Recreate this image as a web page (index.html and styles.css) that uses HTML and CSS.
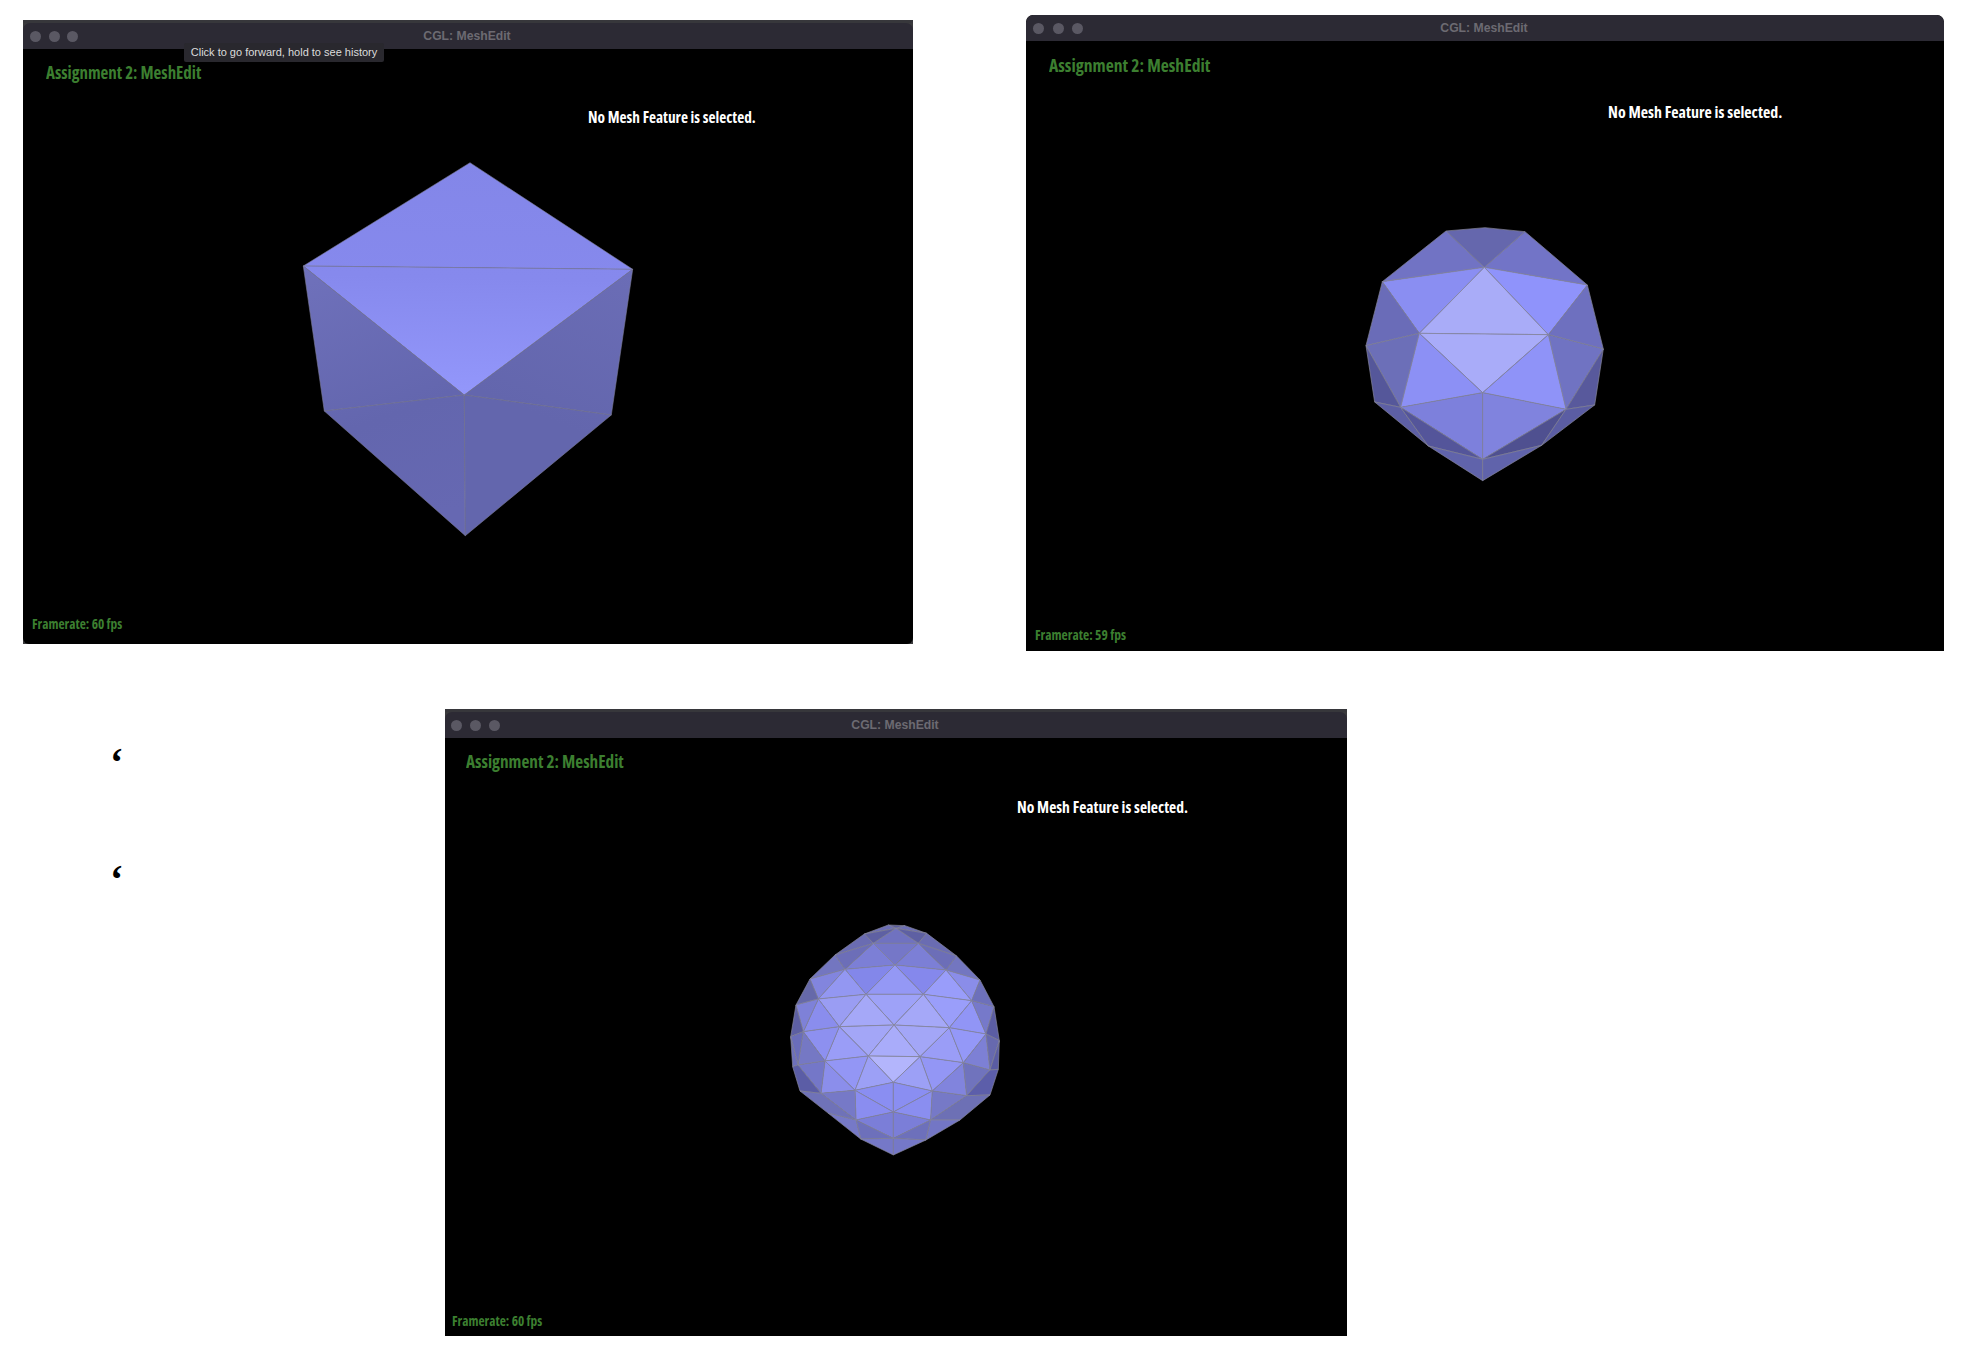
FILE: index.html
```html
<!DOCTYPE html>
<html lang="en">
<head>
<meta charset="utf-8">
<title>CGL: MeshEdit</title>
<link rel="stylesheet" href="styles.css">
</head>
<body>
<main class="page">
  <div class="row row-top">
    <section class="window window-a">
      <div class="strip"><span class="strip-text">like zoom out and it flies</span></div>
      <header class="titlebar">
        <div class="dots"><i></i><i></i><i></i></div>
        <div class="wintitle">CGL: MeshEdit</div>
      </header>
      <div class="tooltip">Click to go forward, hold to see history</div>
      <div class="view">
        <svg class="mesh" viewBox="23 49 890 595" aria-hidden="true">
          <defs>
            <linearGradient id="cubeTop" gradientUnits="userSpaceOnUse" x1="470" y1="160" x2="465" y2="395">
              <stop offset="0" stop-color="#8386e8"/><stop offset="0.5" stop-color="#8689ed"/><stop offset="1" stop-color="#9397fb"/>
            </linearGradient>
            <linearGradient id="cubeL" gradientUnits="userSpaceOnUse" x1="303" y1="270" x2="400" y2="530">
              <stop offset="0" stop-color="#6f71bb"/><stop offset="0.6" stop-color="#6366ae"/><stop offset="1" stop-color="#6668b2"/>
            </linearGradient>
            <linearGradient id="cubeR" gradientUnits="userSpaceOnUse" x1="630" y1="270" x2="520" y2="530">
              <stop offset="0" stop-color="#6b6db6"/><stop offset="0.6" stop-color="#6366ad"/><stop offset="1" stop-color="#6366ad"/>
            </linearGradient>
          </defs>
          <g class="edges edges-faint">
            <polygon fill="url(#cubeTop)" points="470,162.7 303.3,266 632.7,269.3"/>
            <polygon fill="url(#cubeTop)" points="303.3,266 632.7,269.3 464.3,395"/>
            <polygon fill="url(#cubeL)" points="303.3,266 464.3,395 324.3,411"/>
            <polygon fill="url(#cubeL)" points="324.3,411 464.3,395 465.3,535.7"/>
            <polygon fill="url(#cubeR)" points="632.7,269.3 464.3,395 611.3,415"/>
            <polygon fill="url(#cubeR)" points="611.3,415 464.3,395 465.3,535.7"/>
          </g>
        </svg>
        <h2 class="heading">Assignment 2: MeshEdit</h2>
        <p class="status">No Mesh Feature is selected.</p>
        <p class="fps">Framerate: 60 fps</p>
      </div>
      <div class="strip strip-bottom"><span class="strip-text">zoom in and out</span></div>
    </section>

    <section class="window window-b">
      <header class="titlebar">
        <div class="dots"><i></i><i></i><i></i></div>
        <div class="wintitle">CGL: MeshEdit</div>
      </header>
      <div class="view">
        <svg class="mesh" viewBox="1026 41 918 610" aria-hidden="true">
          <g class="edges" transform="translate(1340 210) scale(0.33333)">
            <polygon fill="#6567ad" points="318,63 435,53 555,65 433,172"/>
            <polygon fill="#7173c4" points="318,63 433,172 127,215"/>
            <polygon fill="#7274c7" points="555,65 433,172 742,225"/>
            <polygon fill="#8a8ef2" points="127,215 433,172 238,370"/>
            <polygon fill="#8f93fb" points="433,172 742,225 625,374"/>
            <polygon fill="#a9acf8" points="433,172 238,370 625,374"/>
            <polygon fill="#a9acf9" points="238,370 625,374 428,548"/>
            <polygon fill="#6a6cb8" points="127,215 238,370 78,407"/>
            <polygon fill="#6e70bf" points="742,225 625,374 790,417"/>
            <polygon fill="#6c6fb8" points="78,407 238,370 182,592"/>
            <polygon fill="#7073c2" points="625,374 790,417 678,598"/>
            <polygon fill="#8c90f5" points="238,370 182,592 428,548"/>
            <polygon fill="#8f93f8" points="625,374 678,598 428,548"/>
            <polygon fill="#7d80dc" points="182,592 428,548 428,748"/>
            <polygon fill="#8083de" points="678,598 428,548 428,748"/>
            <polygon fill="#55579a" points="78,407 182,592 104,576"/>
            <polygon fill="#58599c" points="790,417 678,598 764,585"/>
            <polygon fill="#5d5fa5" points="104,576 182,592 265,708"/>
            <polygon fill="#54559a" points="182,592 265,708 428,748"/>
            <polygon fill="#4f5090" points="678,598 605,706 428,748"/>
            <polygon fill="#5b5da3" points="678,598 764,585 605,706"/>
            <polygon fill="#6063ab" points="265,708 428,748 428,812"/>
            <polygon fill="#6063ab" points="605,706 428,748 428,812"/>
          </g>
        </svg>
        <h2 class="heading">Assignment 2: MeshEdit</h2>
        <p class="status">No Mesh Feature is selected.</p>
        <p class="fps">Framerate: 59 fps</p>
      </div>
    </section>
  </div>

  <div class="row row-bottom">
    <aside class="quotes">
      <p class="quote">‘</p>
      <p class="quote">‘</p>
    </aside>
    <section class="window window-c">
      <div class="strip"><span class="strip-text">like zoom out and it flies</span></div>
      <header class="titlebar">
        <div class="dots"><i></i><i></i><i></i></div>
        <div class="wintitle">CGL: MeshEdit</div>
      </header>
      <div class="view">
        <svg class="mesh" viewBox="445 738 902 598" aria-hidden="true">
          <g class="edges" transform="translate(770 910) scale(0.33333)">
            <polygon fill="#5c5ea0" points="355,45 405,47 378,55"/>
            <polygon fill="#6c6eb5" points="355,45 378,55 283,72"/>
            <polygon fill="#6c6eb5" points="405,47 378,55 470,70"/>
            <polygon fill="#5e60a3" points="283,72 378,55 310,100"/>
            <polygon fill="#5e60a3" points="470,70 378,55 445,100"/>
            <polygon fill="#7072c0" points="310,100 378,55 445,100"/>
            <polygon fill="#6a6cb2" points="283,72 310,100 195,135"/>
            <polygon fill="#6a6cb2" points="470,70 445,100 560,138"/>
            <polygon fill="#7577c8" points="310,100 445,100 375,165"/>
            <polygon fill="#7c7fd6" points="310,100 225,178 375,165"/>
            <polygon fill="#7c7fd6" points="445,100 528,180 375,165"/>
            <polygon fill="#6c6eb8" points="195,135 310,100 225,178"/>
            <polygon fill="#6c6eb8" points="560,138 445,100 528,180"/>
            <polygon fill="#7376c0" points="195,135 225,178 120,207"/>
            <polygon fill="#7376c0" points="560,138 528,180 630,210"/>
            <polygon fill="#8285de" points="120,207 225,178 145,267"/>
            <polygon fill="#8a8de9" points="630,210 528,180 605,272"/>
            <polygon fill="#6669a9" points="120,207 145,267 78,285"/>
            <polygon fill="#6d70bb" points="630,210 605,272 672,290"/>
            <polygon fill="#8387ea" points="225,178 375,165 288,253"/>
            <polygon fill="#8588ec" points="375,165 528,180 460,253"/>
            <polygon fill="#9498f5" points="375,165 288,253 460,253"/>
            <polygon fill="#9397f2" points="225,178 288,253 145,267"/>
            <polygon fill="#999dfa" points="528,180 460,253 605,272"/>
            <polygon fill="#9ea2f8" points="288,253 460,253 372,345"/>
            <polygon fill="#9a9df3" points="288,253 145,267 208,350"/>
            <polygon fill="#9a9efa" points="460,253 605,272 538,353"/>
            <polygon fill="#a5a8f8" points="288,253 372,345 208,350"/>
            <polygon fill="#a5a8f8" points="460,253 372,345 538,353"/>
            <polygon fill="#8a8ded" points="145,267 208,350 100,365"/>
            <polygon fill="#9195f6" points="605,272 538,353 648,372"/>
            <polygon fill="#7e81d8" points="78,285 145,267 100,365"/>
            <polygon fill="#7679ca" points="672,290 605,272 648,372"/>
            <polygon fill="#5d5fa3" points="78,285 100,365 62,380"/>
            <polygon fill="#5b5da3" points="672,290 648,372 688,392"/>
            <polygon fill="#a3a6f7" points="372,345 208,350 295,438"/>
            <polygon fill="#a3a6f7" points="372,345 538,353 450,440"/>
            <polygon fill="#a9acfa" points="372,345 295,438 450,440"/>
            <polygon fill="#b3b5fc" points="295,438 450,440 370,517"/>
            <polygon fill="#9a9df7" points="208,350 295,438 165,453"/>
            <polygon fill="#9a9df7" points="538,353 450,440 580,458"/>
            <polygon fill="#8d90f0" points="208,350 100,365 165,453"/>
            <polygon fill="#9498f8" points="538,353 648,372 580,458"/>
            <polygon fill="#7578c4" points="100,365 165,453 84,465"/>
            <polygon fill="#7d80d5" points="648,372 580,458 660,480"/>
            <polygon fill="#6a6dba" points="100,365 84,465 62,380"/>
            <polygon fill="#6769ae" points="648,372 688,392 660,480"/>
            <polygon fill="#6d70bb" points="62,380 84,465 68,470"/>
            <polygon fill="#5a5ca3" points="688,392 685,478 660,480"/>
            <polygon fill="#9396f5" points="295,438 165,453 255,541"/>
            <polygon fill="#9396f5" points="450,440 580,458 487,543"/>
            <polygon fill="#9ca0f6" points="295,438 370,517 255,541"/>
            <polygon fill="#9ca0f6" points="450,440 370,517 487,543"/>
            <polygon fill="#8a8ef2" points="370,517 255,541 370,606"/>
            <polygon fill="#8a8ef2" points="370,517 487,543 370,606"/>
            <polygon fill="#8b8eeb" points="165,453 153,550 255,541"/>
            <polygon fill="#8184dd" points="580,458 590,557 487,543"/>
            <polygon fill="#7477c8" points="165,453 84,465 153,550"/>
            <polygon fill="#7073bd" points="580,458 660,480 590,557"/>
            <polygon fill="#5b5da6" points="84,465 68,470 90,543 153,550"/>
            <polygon fill="#5c5eaa" points="660,480 685,478 660,555 590,557"/>
            <polygon fill="#8a8df0" points="255,541 370,606 258,630"/>
            <polygon fill="#8a8ef0" points="487,543 370,606 482,630"/>
            <polygon fill="#7679c7" points="255,541 153,550 258,630"/>
            <polygon fill="#7679c7" points="487,543 590,557 482,630"/>
            <polygon fill="#6f72b8" points="153,550 90,543 175,610 258,630"/>
            <polygon fill="#6d70b5" points="590,557 660,555 570,630 482,630"/>
            <polygon fill="#7b7ed8" points="258,630 370,606 370,685"/>
            <polygon fill="#7b7ed8" points="482,630 370,606 370,685"/>
            <polygon fill="#6d70bb" points="258,630 370,685 272,687"/>
            <polygon fill="#6d70bb" points="482,630 370,685 468,690"/>
            <polygon fill="#7679c7" points="175,610 258,630 272,687"/>
            <polygon fill="#7376c5" points="570,630 482,630 468,690"/>
            <polygon fill="#7578c8" points="272,687 370,685 370,735"/>
            <polygon fill="#7578c8" points="468,690 370,685 370,735"/>
          </g>
        </svg>
        <h2 class="heading">Assignment 2: MeshEdit</h2>
        <p class="status">No Mesh Feature is selected.</p>
        <p class="fps">Framerate: 60 fps</p>
      </div>
    </section>
  </div>
</main>
</body>
</html>
```
FILE: styles.css
```css
html, body { margin: 0; padding: 0; background: #fff; }
body { width: 1970px; height: 1356px; overflow: hidden; font-family: "Liberation Sans", Arial, sans-serif; }
.page { display: flex; flex-direction: column; }
.row { display: flex; align-items: flex-start; }
.row-top { height: 651px; padding-left: 23px; gap: 113px; }
.row-bottom { margin-top: 58px; }

.quotes { width: 445px; flex: none; padding: 30px 0 0 110px; box-sizing: border-box; }
.quote { margin: 0 0 69px; height: 48px; font: 700 40px/48px "Liberation Serif", serif; color: #000; }

.window { position: relative; flex: none; background: #000; overflow: hidden; display: flex; flex-direction: column; }
.window-a { width: 890px; height: 624px; margin-top: 20px; background: #3a3a3c; }
.window-b { width: 918px; height: 636px; margin-top: 15px; border-radius: 7px 7px 0 0; }
.window-c { width: 902px; height: 627px; background: #3a3a3c; }

.strip { height: 3px; flex: none; overflow: hidden; background: #37373b; padding-left: 198px; }
.strip-text { display: block; font: 400 19px/22px "Liberation Sans", sans-serif; color: #c9c9c9; white-space: nowrap; }
.strip-bottom { padding-left: 466px; background: #3a3a3c; }
.strip-bottom .strip-text { font-size: 11px; line-height: 12px; color: #8f8f8f; }

.titlebar { position: relative; flex: none; height: 26px; background: #2c2a34; display: flex; align-items: center; border-radius: 7px 7px 0 0; }
.dots { display: flex; gap: 7.5px; padding-left: 7px; }
.window-b .dots { gap: 8.5px; padding-left: 7px; }
.window-c .dots { gap: 8px; padding-left: 6px; }
.dots i { display: block; width: 11px; height: 11px; border-radius: 50%; background: #5a5863; }
.wintitle { position: absolute; left: 0; right: 2px; top: 0; line-height: 26px; text-align: center; font-size: 12.2px; font-weight: 700; color: #6c6a72; }

.tooltip { position: absolute; left: 161px; top: 23px; width: 200px; height: 19px; z-index: 2; background: #29282e; color: #dcdcdc; font-size: 11px; line-height: 19px; text-align: center; border-radius: 2px; white-space: nowrap; }

.view { position: relative; flex: 1; background: #000; font-family: "Open Sans", sans-serif; }
.mesh { display: block; width: 100%; height: 100%; }
.edges polygon { stroke: #85859a; stroke-width: 0.7; stroke-linejoin: round; vector-effect: non-scaling-stroke; }
.edges-faint polygon { stroke: #7c7c98; stroke-width: 0.6; }

.heading, .status, .fps { position: absolute; margin: 0; font-weight: 700; font-stretch: 75%; white-space: nowrap; line-height: 1; transform-origin: left center; }
.heading { color: #3c7f30; font-size: 18px; transform: scaleX(0.94); }
.status { color: #fff; font-size: 15.3px; }
.fps { color: #3c7f30; font-size: 13.4px; }

.window-a .heading { left: 23px; top: 14px; }
.window-a .status { left: 565px; top: 61px; }
.window-a .fps { left: 9px; top: 569px; }
.window-a .view { border-radius: 0 0 6px 6px; }

.window-b .heading { left: 23px; top: 15px; font-size: 18.5px; transform: scaleX(0.95); }
.window-b .status { left: 582px; top: 64px; font-size: 15.9px; }
.window-b .fps { left: 9px; top: 588px; font-size: 13.5px; }

.window-c .heading { left: 21px; top: 14px; transform: scaleX(0.955); }
.window-c .status { left: 572px; top: 62px; font-size: 15.6px; }
.window-c .fps { left: 7px; top: 577px; }
```
